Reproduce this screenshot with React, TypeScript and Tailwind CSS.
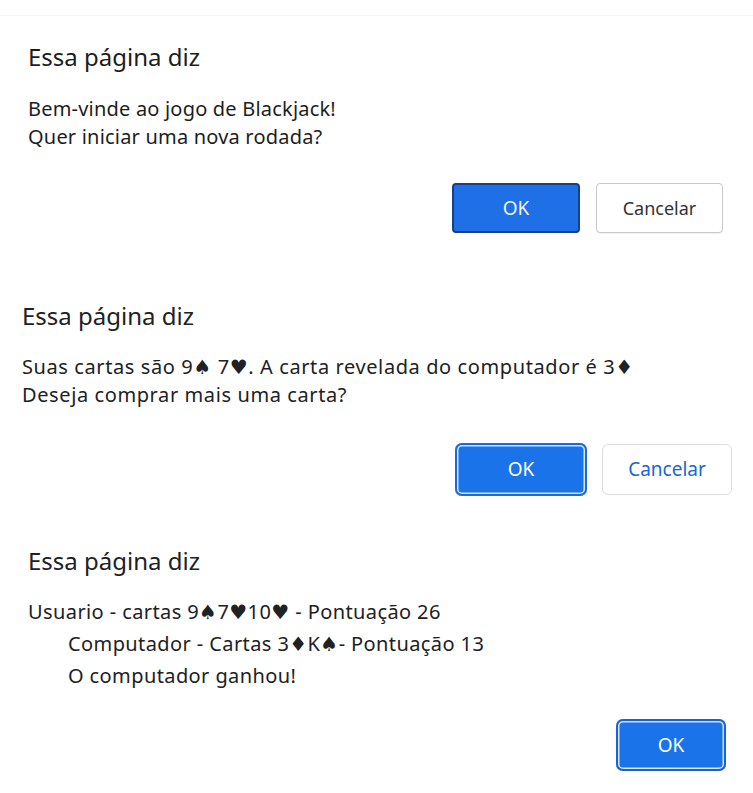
import React from "react";

const font = { fontFamily: '"Noto Sans", "Open Sans", "DejaVu Sans", sans-serif' };

export default function App() {
  return (
    <div className="w-[753px] h-[793px] bg-white flex flex-col overflow-hidden pt-[15px] text-[#202124]" style={font}>
      {/* Dialog 1 */}
      <section className="h-[247px] flex flex-col pt-[25px] pl-[28px] pr-[30px] border-t border-[#f4f4f4]">
        <div className="text-[24px] leading-[32px] text-[#1d1d1d]">Essa página diz</div>
        <div className="mt-[22px] text-[20px] leading-[28px] text-[#1d1d1d] tracking-[0.2px]">
          <div>Bem-vinde ao jogo de Blackjack!</div>
          <div>Quer iniciar uma nova rodada?</div>
        </div>
        <div className="mt-[32px] flex justify-end gap-[16px]">
          <button className="w-[128px] h-[50px] rounded-[4px] bg-[#1f6fe6] border-2 border-[#183f87] text-[19px] text-[#eef3fb] flex items-center justify-center">
            OK
          </button>
          <button className="w-[127px] h-[50px] rounded-[4px] bg-white border border-[#c9c9c9] text-[18px] text-[#333333] flex items-center justify-center shadow-[0_1px_1px_rgba(0,0,0,0.06)]">
            Cancelar
          </button>
        </div>
      </section>

      {/* Dialog 2 */}
      <section className="h-[258px] flex flex-col pt-[38px] pl-[22px] pr-[21px]">
        <div className="text-[24px] leading-[32px]">Essa página diz</div>
        <div className="mt-[21px] text-[20px] leading-[28px] tracking-[0.6px]">
          <div>Suas cartas são 9♠ 7♥. A carta revelada do computador é 3♦</div>
          <div>Deseja comprar mais uma carta?</div>
        </div>
        <div className="mt-[34px] flex justify-end items-center gap-[15px]">
          <button className="w-[132px] h-[53px] rounded-[7px] bg-[#1a73e8] shadow-[inset_0_0_0_2px_#1a6ad8,inset_0_0_0_3.5px_#d6e4fa] text-[19px] text-white flex items-center justify-center">
            OK
          </button>
          <button className="w-[130px] h-[51px] rounded-[6px] bg-white border border-[#dadce0] text-[19px] text-[#1a67d2] flex items-center justify-center">
            Cancelar
          </button>
        </div>
      </section>

      {/* Dialog 3 */}
      <section className="flex-1 flex flex-col pt-[25px] pl-[28px] pr-[27px]">
        <div className="text-[24px] leading-[32px]">Essa página diz</div>
        <div className="mt-[19px] text-[20px] leading-[32px] tracking-[0.4px]">
          <div>Usuario - cartas 9♠7♥10♥ - Pontuação 26</div>
          <div className="pl-[40px]">Computador - Cartas 3♦K♠- Pontuação 13</div>
          <div className="pl-[40px]">O computador ganhou!</div>
        </div>
        <div className="mt-[27px] flex justify-end">
          <button className="w-[110px] h-[52px] rounded-[7px] bg-[#1a73e8] shadow-[inset_0_0_0_2px_#1a62d0,inset_0_0_0_3.5px_#d6e4fa] text-[19px] text-white flex items-center justify-center">
            OK
          </button>
        </div>
      </section>
    </div>
  );
}
